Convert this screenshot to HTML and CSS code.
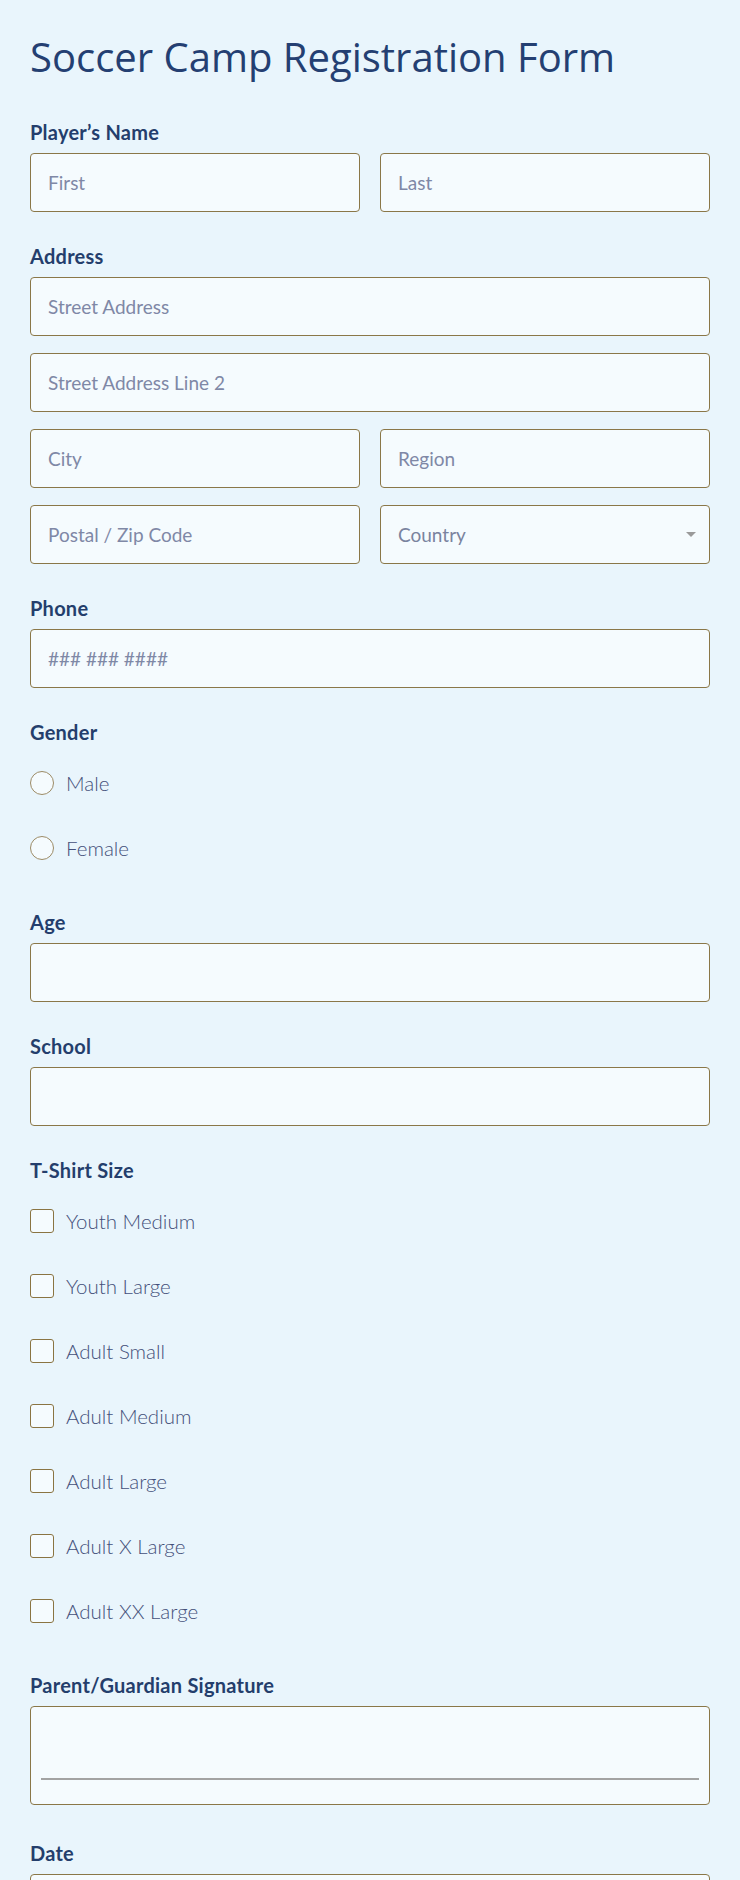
FILE: index.html
```html
<!DOCTYPE html>
<html lang="en">
<head>
<meta charset="utf-8">
<title>Soccer Camp Registration Form</title>
<link rel="stylesheet" href="styles.css">
</head>
<body>
<main class="form">
  <h1 class="title">Soccer Camp Registration Form</h1>

  <div class="field">
    <div class="label">Player’s Name</div>
    <div class="grid2">
      <input class="input" type="text" placeholder="First">
      <input class="input" type="text" placeholder="Last">
    </div>
  </div>

  <div class="field">
    <div class="label">Address</div>
    <div class="stack">
      <input class="input" type="text" placeholder="Street Address">
      <input class="input" type="text" placeholder="Street Address Line 2">
      <div class="grid2">
        <input class="input" type="text" placeholder="City">
        <input class="input" type="text" placeholder="Region">
      </div>
      <div class="grid2">
        <input class="input" type="text" placeholder="Postal / Zip Code">
        <div class="input select">
          <span class="select-text">Country</span>
          <svg class="caret" width="10" height="5" viewBox="0 0 10 5"><path d="M0 0H10L5 5Z" fill="#9a9a9a"/></svg>
        </div>
      </div>
    </div>
  </div>

  <div class="field">
    <div class="label">Phone</div>
    <input class="input" type="text" placeholder="### ### ####">
  </div>

  <div class="field choice">
    <div class="label">Gender</div>
    <div class="options">
      <div class="option"><span class="radio"></span><span class="opt-text">Male</span></div>
      <div class="option"><span class="radio"></span><span class="opt-text">Female</span></div>
    </div>
  </div>

  <div class="field">
    <div class="label">Age</div>
    <input class="input" type="text">
  </div>

  <div class="field">
    <div class="label">School</div>
    <input class="input" type="text">
  </div>

  <div class="field choice">
    <div class="label">T-Shirt Size</div>
    <div class="options">
      <div class="option"><span class="check"></span><span class="opt-text">Youth Medium</span></div>
      <div class="option"><span class="check"></span><span class="opt-text">Youth Large</span></div>
      <div class="option"><span class="check"></span><span class="opt-text">Adult Small</span></div>
      <div class="option"><span class="check"></span><span class="opt-text">Adult Medium</span></div>
      <div class="option"><span class="check"></span><span class="opt-text">Adult Large</span></div>
      <div class="option"><span class="check"></span><span class="opt-text">Adult X Large</span></div>
      <div class="option"><span class="check"></span><span class="opt-text">Adult XX Large</span></div>
    </div>
  </div>

  <div class="field signature-field">
    <div class="label">Parent/Guardian Signature</div>
    <div class="signature"><div class="sig-line"></div></div>
  </div>

  <div class="field">
    <div class="label">Date</div>
    <input class="input" type="text">
  </div>
</main>
</body>
</html>
```

FILE: styles.css
```css
* { box-sizing: border-box; }

html, body {
  margin: 0;
  padding: 0;
  background: #e9f5fc;
}

body {
  font-family: "Lato", "Liberation Sans", sans-serif;
}

.form {
  padding: 30px 30px 40px;
  width: 740px;
}

.title {
  margin: 0 0 36px;
  font-family: "Open Sans", "Liberation Sans", sans-serif;
  font-weight: 400;
  font-size: 40px;
  line-height: 54px;
  color: #243f72;
}

.field {
  margin-bottom: 32px;
}

.field.choice {
  margin-bottom: 30px;
}

.field.signature-field {
  margin-bottom: 36px;
}

.label {
  font-size: 20px;
  line-height: 24px;
  font-weight: 700;
  letter-spacing: 0.25px;
  color: #243e6c;
  margin-bottom: 9px;
}

.grid2 {
  display: grid;
  grid-template-columns: 1fr 1fr;
  gap: 20px;
}

.stack {
  display: flex;
  flex-direction: column;
  gap: 17px;
}

.input {
  display: block;
  width: 100%;
  height: 59px;
  margin: 0;
  padding: 0 17px;
  border: 1px solid #8a7748;
  border-radius: 4px;
  background: #f5fbfe;
  font-family: "Lato", "Liberation Sans", sans-serif;
  font-size: 19px;
  color: #3b4a6b;
  outline: none;
}

.input::placeholder {
  color: #7f88a6;
  opacity: 1;
}

.select {
  display: flex;
  align-items: center;
  justify-content: space-between;
  padding-right: 13px;
}

.select-text {
  color: #7a839f;
  font-size: 19px;
}

.caret {
  display: block;
}

.options {
  margin-top: -3px;
}

.option {
  height: 65px;
  display: flex;
  align-items: center;
  gap: 12px;
}

.radio {
  flex: none;
  width: 24px;
  height: 24px;
  border: 1px solid #9c8b66;
  border-radius: 50%;
  background: #f5fbfe;
}

.check {
  flex: none;
  width: 24px;
  height: 24px;
  border: 1px solid #8a7442;
  border-radius: 3px;
  background: #f5fbfe;
}

.opt-text {
  font-size: 20.5px;
  font-weight: 300;
  color: #44507a;
  line-height: 24px;
}

.signature {
  height: 99px;
  border: 1px solid #8a7748;
  border-radius: 4px;
  background: #f5fbfe;
  padding: 71px 10px 0;
}

.sig-line {
  height: 2px;
  background: #a3a3a3;
}
```
